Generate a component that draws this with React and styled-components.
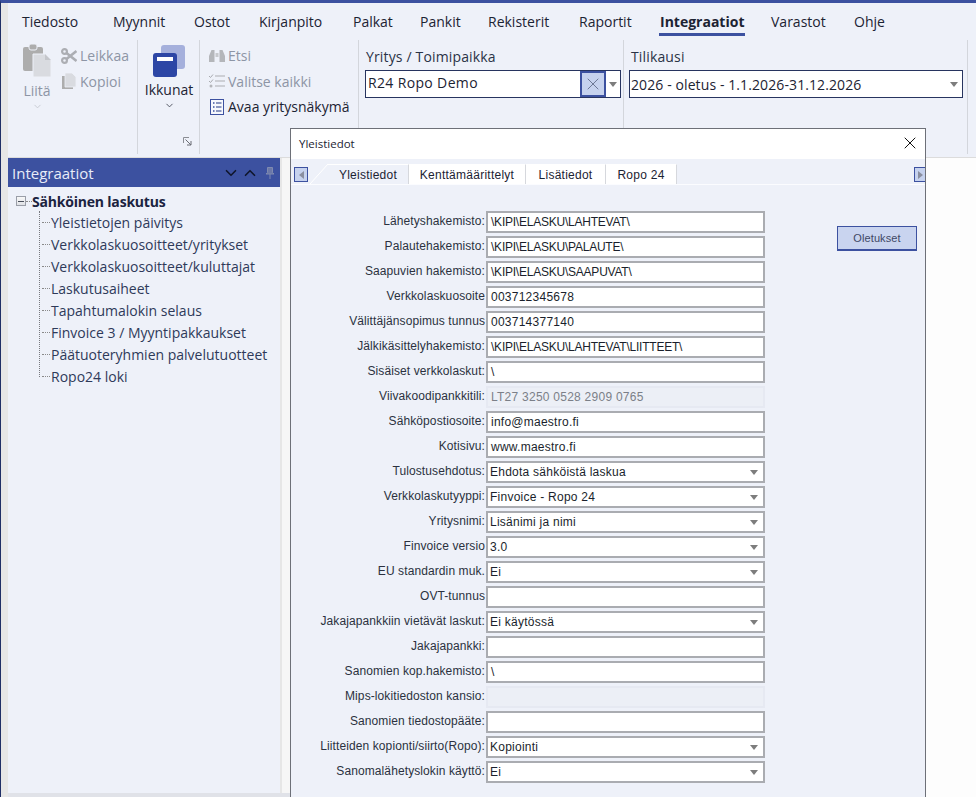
import React from "react";
import styled, { createGlobalStyle } from "styled-components";
import { X, ChevronDown, ChevronUp } from "lucide-react";

const UI_FONT = `"Open Sans", "Noto Sans", sans-serif`;
const FORM_FONT = `"Liberation Sans", Arial, sans-serif`;

const GlobalStyle = createGlobalStyle`
  html, body {
    margin: 0;
    padding: 0;
    background: #fdfdfd;
  }
  * {
    box-sizing: border-box;
  }
`;

const Shell = styled.div`
  position: relative;
  width: 976px;
  height: 797px;
  overflow: hidden;
  display: flex;
  border-top: 3px solid #3c51a0;
  border-left: 1px solid #1f2f66;
  font-family: ${UI_FONT};
  color: #1c2333;
`;

const Gutter = styled.div`
  width: 7px;
  background: #e6e6e6;
`;

const Main = styled.div`
  flex: 1;
  display: flex;
  flex-direction: column;
  min-width: 0;
`;

/* top menu */
const MenuBar = styled.div`
  height: 34px;
  display: flex;
  padding-left: 14px;
  background: #eef1f9;
  font-size: 14px;
`;

const MenuSlot = styled.div`
  width: ${(p) => p.$w}px;
  flex: none;
`;

const MenuItem = styled.div`
  display: inline-block;
  height: 33px;
  padding: 9px 1px 0;
  margin-left: -1px;
  line-height: 20px;
  white-space: nowrap;
  font-weight: ${(p) => (p.$active ? 700 : 400)};
  border-bottom: 3px solid ${(p) => (p.$active ? "#3c51a0" : "transparent")};
`;

/* ribbon */
const Ribbon = styled.div`
  height: 121px;
  display: flex;
  background: #eef1f9;
  border-bottom: 1px solid #dcdcdc;
  font-size: 14px;
`;

const Group = styled.div`
  width: ${(p) => p.$w}px;
  height: 114px;
  margin-top: 3px;
  padding-top: ${(p) => p.$top ?? 3}px;
  padding-left: ${(p) => p.$left ?? 0}px;
  border-right: 1px solid #d3d6dc;
  display: flex;
  flex-direction: ${(p) => (p.$column ? "column" : "row")};
`;

const LargeButton = styled.div`
  width: ${(p) => p.$w}px;
  display: flex;
  flex-direction: column;
  align-items: center;
  margin-top: ${(p) => p.$top ?? 1}px;
  color: ${(p) => (p.$disabled ? "#8d95a5" : "#1c2333")};
`;

const LargeLabel = styled.div`
  margin-top: 3px;
  line-height: 20px;
`;

const SmallColumn = styled.div`
  display: flex;
  flex-direction: column;
  margin-left: ${(p) => p.$left ?? 0}px;
`;

const SmallButton = styled.div`
  height: 25.5px;
  display: flex;
  align-items: center;
  gap: 3px;
  white-space: nowrap;
  color: ${(p) => (p.$disabled ? "#8d95a5" : "#1c2333")};
`;

const Launcher = styled.svg`
  align-self: flex-end;
  margin: auto 7px 8px 0;
`;

const FieldLabel = styled.div`
  line-height: 20px;
  letter-spacing: 0.15px;
  padding-left: ${(p) => p.$left ?? 0}px;
  color: #2a3346;
`;

const Combo = styled.div`
  width: ${(p) => p.$w}px;
  height: 28px;
  margin-top: 3px;
  display: flex;
  align-items: stretch;
  background: #fff;
  border: 1px solid #27345f;
`;

const ComboText = styled.div`
  flex: 1;
  line-height: 24px;
  letter-spacing: ${(p) => p.$spacing}px;
  padding-left: ${(p) => p.$left}px;
  padding-top: ${(p) => p.$down}px;
  white-space: nowrap;
  color: #1c2333;
`;

const ClearButton = styled.div`
  width: 26px;
  display: flex;
  align-items: center;
  justify-content: center;
  background: #c6d2ee;
  border: 2px solid #3c51a0;
  color: #6d7895;
`;

const ComboArrow = styled.div`
  width: ${(p) => p.$w}px;
  display: flex;
  align-items: center;
  justify-content: center;
`;

const Triangle = styled.span`
  width: 0;
  height: 0;
  border-left: 4px solid transparent;
  border-right: 4px solid transparent;
  border-top: 5px solid #7d7d7d;
`;

/* workspace */
const Workspace = styled.div`
  flex: 1;
  display: flex;
  background: #fdfdfd;
`;

const SideArea = styled.div`
  display: flex;
  border-bottom: 4px solid #e0e2e8;
`;

const SidePanel = styled.div`
  width: 272px;
  background: #eef1f9;
`;

const Splitter = styled.div`
  width: 10px;
  background: #f6f6f6;
  border-left: 2px solid #e6e6e6;
`;

const PanelHeader = styled.div`
  height: 29px;
  display: flex;
  align-items: center;
  padding: 0 5px 0 4px;
  background: #3c51a0;
  color: #e8ecf8;
  font-size: 15px;
`;

const PanelTitle = styled.div`
  flex: 1;
`;

const HeaderIcons = styled.div`
  display: flex;
  align-items: center;
  gap: 1px;
  color: #10162c;
`;

const PinSvg = styled.svg`
  margin-left: 5px;
`;

const Tree = styled.div`
  padding-top: 3px;
  font-size: 14px;
`;

const RootRow = styled.div`
  height: 22px;
  display: flex;
  align-items: center;
  padding-left: 8px;
  font-weight: 700;
  letter-spacing: -0.2px;
  color: #1b2340;
`;

const Expander = styled.span`
  width: 10px;
  height: 10px;
  border: 1px solid #9a9ea8;
  background: linear-gradient(#f8f8f8, #dfe1e6);
  display: flex;
  align-items: center;
  justify-content: center;
  &::after {
    content: "";
    width: 6px;
    height: 1px;
    background: #4a4f5c;
  }
`;

const RootDash = styled.span`
  width: 6px;
  border-top: 1px dotted #8a8a8a;
`;

const ChildArea = styled.div`
  display: flex;
  margin-left: 31px;
`;

const TreeLine = styled.div`
  width: 1px;
  margin-bottom: 11px;
  margin-top: -1px;
  border-left: 1px dotted #77797f;
`;

const ChildList = styled.div`
  display: flex;
  flex-direction: column;
`;

const ChildRow = styled.div`
  height: 22px;
  display: flex;
  align-items: center;
  padding-bottom: 2px;
  white-space: nowrap;
  color: #2e3a59;
`;

const ChildDash = styled.span`
  width: 8px;
  margin: 0 1px 0 2px;
  border-top: 1px dotted #8a8a8a;
`;

/* dialog window */
const Dialog = styled.div`
  position: absolute;
  left: 289px;
  top: 125px;
  width: 636px;
  height: 669px;
  display: flex;
  flex-direction: column;
  background: #eef1f9;
  border: 1px solid #6d7078;
  border-bottom: none;
`;

const TitleBar = styled.div`
  height: 30px;
  display: flex;
  align-items: center;
  justify-content: space-between;
  padding: 0 5px 2px 8px;
  background: #fff;
  font-size: 11.5px;
  color: #1c2333;
`;

const TabStrip = styled.div`
  height: 26px;
  display: flex;
  align-items: flex-end;
  padding-left: 3px;
  border-bottom: 1px solid #fbfcff;
  font-family: ${FORM_FONT};
  font-size: 12px;
  letter-spacing: 0.25px;
`;

const ScrollButton = styled.div`
  width: ${(p) => p.$w}px;
  height: 15px;
  align-self: flex-start;
  margin-top: 8px;
  margin-left: ${(p) => (p.$right ? "auto" : "0")};
  display: flex;
  align-items: center;
  justify-content: center;
  background: #c6d2ee;
  border: 1px solid #3c51a0;
  ${(p) => p.$right && "border-right: none;"}
`;

const ScrollTriangle = styled.span`
  width: 0;
  height: 0;
  border-top: 4px solid transparent;
  border-bottom: 4px solid transparent;
  ${(p) =>
    p.$right
      ? "border-left: 5px solid #8a8fa0;"
      : "border-right: 5px solid #8a8fa0;"}
`;

const TabSlant = styled.svg`
  margin-left: 2px;
  display: block;
`;

const Tab = styled.div`
  width: ${(p) => p.$w}px;
  height: 20px;
  line-height: 20px;
  text-align: center;
  white-space: nowrap;
  background: ${(p) => (p.$active ? "#eef1f9" : "#ffffff")};
  border-top: 1px solid #fff;
  border-right: 1px solid #d6d8dd;
  color: #1c2333;
`;

const DialogBody = styled.div`
  display: flex;
  align-items: flex-start;
  padding-top: 26px;
`;

const FormGrid = styled.div`
  display: grid;
  grid-template-columns: 194px 279px;
  grid-auto-rows: 22px;
  column-gap: 1px;
  row-gap: 3px;
  font-family: ${FORM_FONT};
  font-size: 12px;
`;

const RowLabel = styled.div`
  line-height: 21px;
  text-align: right;
  white-space: nowrap;
  letter-spacing: 0.1px;
  color: #2b3140;
`;

const Field = styled.div`
  height: 22px;
  display: flex;
  align-items: center;
  justify-content: space-between;
  padding: 0 5px 0 ${(p) => (p.$select ? 2 : 3)}px;
  white-space: nowrap;
  letter-spacing: ${(p) => (p.$path ? "-0.23px" : "0.25px")};
  color: ${(p) => (p.$disabled ? "#7b7f88" : "#1a1f2c")};
  background: ${(p) => (p.$disabled ? "#eceff6" : "#fff")};
  border: 2px solid ${(p) => (p.$disabled ? "#e6e9f2" : "#aaacb1")};
`;

const DefaultsButton = styled.div`
  width: 80px;
  height: 25px;
  margin: 15px 0 0 72px;
  display: flex;
  align-items: center;
  justify-content: center;
  background: #c9d4ef;
  border: 1px solid #3c51a0;
  border-bottom-width: 2px;
  font-family: ${FORM_FONT};
  font-size: 11px;
  letter-spacing: 0.1px;
  color: #3f4866;
`;

const MENU = [
  { label: "Tiedosto", w: 91 },
  { label: "Myynnit", w: 81 },
  { label: "Ostot", w: 65 },
  { label: "Kirjanpito", w: 94 },
  { label: "Palkat", w: 67 },
  { label: "Pankit", w: 68 },
  { label: "Rekisterit", w: 91 },
  { label: "Raportit", w: 81 },
  { label: "Integraatiot", w: 111, active: true },
  { label: "Varastot", w: 83 },
  { label: "Ohje", w: 40 },
];

const TREE = [
  "Yleistietojen päivitys",
  "Verkkolaskuosoitteet/yritykset",
  "Verkkolaskuosoitteet/kuluttajat",
  "Laskutusaiheet",
  "Tapahtumalokin selaus",
  "Finvoice 3 / Myyntipakkaukset",
  "Päätuoteryhmien palvelutuotteet",
  "Ropo24 loki",
];

const TABS = [
  { label: "Yleistiedot", w: 81, active: true },
  { label: "Kenttämäärittelyt", w: 117 },
  { label: "Lisätiedot", w: 80 },
  { label: "Ropo 24", w: 71 },
];

const ROWS = [
  { label: "Lähetyshakemisto:", value: "\\KIPI\\ELASKU\\LAHTEVAT\\" },
  { label: "Palautehakemisto:", value: "\\KIPI\\ELASKU\\PALAUTE\\" },
  { label: "Saapuvien hakemisto:", value: "\\KIPI\\ELASKU\\SAAPUVAT\\" },
  { label: "Verkkolaskuosoite", value: "003712345678" },
  { label: "Välittäjänsopimus tunnus", value: "003714377140" },
  { label: "Jälkikäsittelyhakemisto:", value: "\\KIPI\\ELASKU\\LAHTEVAT\\LIITTEET\\" },
  { label: "Sisäiset verkkolaskut:", value: "\\" },
  { label: "Viivakoodipankkitili:", value: "LT27 3250 0528 2909 0765", disabled: true },
  { label: "Sähköpostiosoite:", value: "info@maestro.fi" },
  { label: "Kotisivu:", value: "www.maestro.fi" },
  { label: "Tulostusehdotus:", value: "Ehdota sähköistä laskua", select: true },
  { label: "Verkkolaskutyyppi:", value: "Finvoice - Ropo 24", select: true },
  { label: "Yritysnimi:", value: "Lisänimi ja nimi", select: true },
  { label: "Finvoice versio", value: "3.0", select: true },
  { label: "EU standardin muk.", value: "Ei", select: true },
  { label: "OVT-tunnus", value: "" },
  { label: "Jakajapankkiin vietävät laskut:", value: "Ei käytössä", select: true },
  { label: "Jakajapankki:", value: "" },
  { label: "Sanomien kop.hakemisto:", value: "\\" },
  { label: "Mips-lokitiedoston kansio:", value: "", disabled: true },
  { label: "Sanomien tiedostopääte:", value: "" },
  { label: "Liitteiden kopionti/siirto(Ropo):", value: "Kopiointi", select: true },
  { label: "Sanomalähetyslokin käyttö:", value: "Ei", select: true },
];

const PasteIcon = () => (
  <svg width="28" height="34" viewBox="0 0 28 34">
    <rect x="0" y="3" width="20" height="24" rx="2" fill="#adadad" />
    <rect x="6" y="0" width="8" height="6" rx="2" fill="#adadad" stroke="#eef1f9" />
    <path d="M10 10h12l6 6v17H10z" fill="#d9dbe0" stroke="#eef1f9" />
    <path d="M22 10v6h6z" fill="#c4c6cb" />
  </svg>
);

const ScissorsIcon = () => (
  <svg width="16" height="16" viewBox="0 0 16 16">
    <circle cx="3.5" cy="3.5" r="2.4" fill="none" stroke="#acaeb3" strokeWidth="2.2" />
    <circle cx="3.5" cy="12.5" r="2.4" fill="none" stroke="#acaeb3" strokeWidth="2.2" />
    <path d="M5.5 5L15.5 13M5.5 11L15.5 3" stroke="#acaeb3" strokeWidth="2.6" />
  </svg>
);

const CopyIcon = () => (
  <svg width="16" height="16" viewBox="0 0 16 16">
    <rect x="1" y="3" width="11" height="13" fill="#adadad" />
    <path d="M4 0h7l4 4v10H4z" fill="#d9dbe0" stroke="#eef1f9" strokeWidth="0.8" />
  </svg>
);

const WindowsIcon = () => (
  <svg width="32" height="32" viewBox="0 0 32 32">
    <rect x="8" y="0" width="24" height="24" rx="3" fill="#a5b0dc" />
    <rect x="0" y="8" width="24" height="24" rx="3" fill="#2d46a5" />
    <rect x="4" y="12" width="16" height="4" fill="#fff" />
  </svg>
);

const BinocularsIcon = () => (
  <svg width="16" height="14" viewBox="0 0 16 14">
    <path d="M2.5 1h3v12H0v-6z" fill="#b4b6ba" />
    <path d="M10.5 1h3L16 7v6h-5.5z" fill="#b4b6ba" />
    <rect x="6.5" y="4" width="3" height="4" fill="#c6c8cc" />
  </svg>
);

const ChecklistIcon = () => (
  <svg width="16" height="14" viewBox="0 0 16 14">
    <path d="M0 2l1.5 1.5L4 0.5M0 7l1.5 1.5L4 5.5" fill="none" stroke="#a9abb0" />
    <circle cx="2" cy="12" r="1.5" fill="#b4b6ba" />
    <path d="M6 2h10M6 7h10M6 12h10" stroke="#c2c4c9" strokeWidth="1.6" />
  </svg>
);

const ListViewIcon = () => (
  <svg width="16" height="16" viewBox="0 0 16 16">
    <rect x="1.5" y="0.5" width="13" height="15" fill="#f6f8fd" stroke="#3c51a0" />
    <path d="M4 4h1.5M4 8h1.5M4 12h1.5" stroke="#3c51a0" strokeWidth="1.5" />
    <path d="M7 4h5.5M7 8h5.5M7 12h5.5" stroke="#6a78ad" strokeWidth="1.5" />
  </svg>
);

const PinIcon = () => (
  <PinSvg width="10" height="12" viewBox="0 0 10 12">
    <path d="M2.5 0.5h5v5l1.5 1.5H1l1.5-1.5zM5 7v5" fill="#6b78a8" stroke="#7f8ab0" />
  </PinSvg>
);

export default function App() {
  return (
    <>
      <GlobalStyle />
      <Shell>
        <Gutter />
        <Main>
          <MenuBar>
            {MENU.map((item) => (
              <MenuSlot key={item.label} $w={item.w}>
                <MenuItem $active={item.active}>{item.label}</MenuItem>
              </MenuSlot>
            ))}
          </MenuBar>

          <Ribbon>
            <Group $w={130} $left={7}>
              <LargeButton $w={44} $disabled>
                <PasteIcon />
                <LargeLabel>Liitä</LargeLabel>
                <ChevronDown size={11} color="#c6c9d1" />
              </LargeButton>
              <SmallColumn $left={2}>
                <SmallButton $disabled>
                  <ScissorsIcon />
                  Leikkaa
                </SmallButton>
                <SmallButton $disabled>
                  <CopyIcon />
                  Kopioi
                </SmallButton>
              </SmallColumn>
            </Group>

            <Group $w={62} $column>
              <LargeButton $w={62} $top={2}>
                <WindowsIcon />
                <LargeLabel>Ikkunat</LargeLabel>
                <ChevronDown size={11} color="#4a4f5c" />
              </LargeButton>
              <Launcher width="9" height="9" viewBox="0 0 9 9">
                <path d="M0.5 6V0.5H6" fill="none" stroke="#8a8d94" />
                <path d="M2.5 2.5L8 8M8 4v4H4" fill="none" stroke="#6a6d74" />
              </Launcher>
            </Group>

            <Group $w={159} $left={9}>
              <SmallColumn>
                <SmallButton $disabled>
                  <BinocularsIcon />
                  Etsi
                </SmallButton>
                <SmallButton $disabled>
                  <ChecklistIcon />
                  Valitse kaikki
                </SmallButton>
                <SmallButton>
                  <ListViewIcon />
                  Avaa yritysnäkymä
                </SmallButton>
              </SmallColumn>
            </Group>

            <Group $w={265} $left={6} $top={7} $column>
              <FieldLabel $left={1}>Yritys / Toimipaikka</FieldLabel>
              <Combo $w={256}>
                <ComboText $left={2} $down={0} $spacing={0.35}>
                  R24 Ropo Demo
                </ComboText>
                <ClearButton>
                  <X size={20} strokeWidth={1.2} />
                </ClearButton>
                <ComboArrow $w={14}>
                  <Triangle />
                </ComboArrow>
              </Combo>
            </Group>

            <Group $w={344} $left={5} $top={7} $column>
              <FieldLabel $left={2}>Tilikausi</FieldLabel>
              <Combo $w={334}>
                <ComboText $left={1} $down={2} $spacing={0.1}>
                  2026 - oletus - 1.1.2026-31.12.2026
                </ComboText>
                <ComboArrow $w={16}>
                  <Triangle />
                </ComboArrow>
              </Combo>
            </Group>
          </Ribbon>

          <Workspace>
            <SideArea>
              <SidePanel>
                <PanelHeader>
                  <PanelTitle>Integraatiot</PanelTitle>
                  <HeaderIcons>
                    <ChevronDown size={18} strokeWidth={2.2} />
                    <ChevronUp size={18} strokeWidth={2.2} />
                    <PinIcon />
                  </HeaderIcons>
                </PanelHeader>
                <Tree>
                  <RootRow>
                    <Expander />
                    <RootDash />
                    Sähköinen laskutus
                  </RootRow>
                  <ChildArea>
                    <TreeLine />
                    <ChildList>
                      {TREE.map((item) => (
                        <ChildRow key={item}>
                          <ChildDash />
                          {item}
                        </ChildRow>
                      ))}
                    </ChildList>
                  </ChildArea>
                </Tree>
              </SidePanel>
              <Splitter />
            </SideArea>
          </Workspace>
        </Main>

        <Dialog>
          <TitleBar>
            Yleistiedot
            <X size={20} strokeWidth={1.2} color="#111" />
          </TitleBar>
          <TabStrip>
            <ScrollButton $w={14}>
              <ScrollTriangle />
            </ScrollButton>
            <TabSlant width="18" height="20" viewBox="0 0 18 20">
              <path d="M0 20L18 0V20z" fill="#eef1f9" />
              <path d="M0 20L18 0" stroke="#fff" />
            </TabSlant>
            {TABS.map((tab) => (
              <Tab key={tab.label} $w={tab.w} $active={tab.active}>
                {tab.label}
              </Tab>
            ))}
            <ScrollButton $w={11} $right>
              <ScrollTriangle $right />
            </ScrollButton>
          </TabStrip>
          <DialogBody>
            <FormGrid>
              {ROWS.map((row) => (
                <React.Fragment key={row.label}>
                  <RowLabel>{row.label}</RowLabel>
                  <Field
                    $select={row.select}
                    $disabled={row.disabled}
                    $path={row.value.startsWith("\\KIPI")}
                  >
                    {row.value}
                    {row.select && <Triangle />}
                  </Field>
                </React.Fragment>
              ))}
            </FormGrid>
            <DefaultsButton>Oletukset</DefaultsButton>
          </DialogBody>
        </Dialog>
      </Shell>
    </>
  );
}
